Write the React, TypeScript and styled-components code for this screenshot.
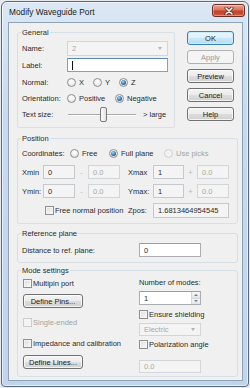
import React from 'react';
import styled, { createGlobalStyle, css } from 'styled-components';

const GlobalStyle = createGlobalStyle`
  html, body {
    margin: 0;
    padding: 0;
  }
  body {
    width: 250px;
    height: 388px;
    overflow: hidden;
    background: #e6e9ed;
    font-family: "Liberation Sans", Arial, sans-serif;
    font-size: 7.5px;
    color: #2b2b2b;
  }
  * {
    box-sizing: border-box;
  }
`;

const Window = styled.div`
  width: 248px;
  height: 386px;
  margin: 1px;
  border: 1px solid #5b6b7e;
  border-radius: 6px 6px 4px 4px;
  background: linear-gradient(180deg, #dbe7f4 0%, #c9daee 30%, #c2d4ea 100%);
  box-shadow: inset 0 0 0 1px rgba(255, 255, 255, 0.55);
  display: flex;
  flex-direction: column;
  padding: 0 5px 5px 6px;
`;

const TitleBar = styled.div`
  height: 20px;
  display: flex;
  align-items: flex-start;
  justify-content: space-between;
`;

const Title = styled.span`
  margin: 5px 0 0 1px;
  font-size: 8.3px;
  line-height: 10px;
  color: #1b1b1b;
`;

const CloseButton = styled.div`
  width: 33px;
  height: 13px;
  margin: 2px -2px 0 0;
  border: 1px solid #6e2e25;
  border-radius: 3px;
  background: linear-gradient(180deg, #eaa796 0%, #d8725c 45%, #c2412b 55%, #cc5a40 100%);
  box-shadow: inset 0 0 0 1px rgba(255, 255, 255, 0.35);
  display: flex;
  align-items: center;
  justify-content: center;
`;

const Client = styled.div`
  flex: 1;
  background: #f0f0f0;
  border: 1px solid #8ea2ba;
  padding: 5px 4px 0 8px;
  display: flex;
  flex-direction: column;
`;

const TopArea = styled.div`
  display: flex;
  align-items: flex-start;
  gap: 12px;
`;

const Group = styled.fieldset<{ $width?: number; $gap?: number; $bottom?: number }>`
  margin: ${p => p.$gap ?? 0}px 0 0 0;
  padding: 3px 6px ${p => p.$bottom ?? 5}px 4px;
  border: 1px solid #d5dfe5;
  border-radius: 3px;
  min-width: 0;
  ${p =>
    p.$width &&
    css`
      width: ${p.$width}px;
      flex: none;
    `}
`;

const Legend = styled.legend`
  margin-left: -1px;
  padding: 0 1px;
  font-size: 7.5px;
  line-height: 9px;
  color: #2b2b2b;
`;

const FormGrid = styled.div`
  display: grid;
  grid-template-columns: 45px 101px;
  grid-template-rows: 16px 16px 16px 15px 15px;
  row-gap: 1px;
  align-items: center;
`;

const Text = styled.span<{ $disabled?: boolean; $pad?: number }>`
  white-space: nowrap;
  line-height: 9px;
  color: ${p => (p.$disabled ? '#a3a3a3' : '#2b2b2b')};
  padding-left: ${p => p.$pad ?? 0}px;
`;

const Field = styled.div<{ $tone?: 'white' | 'readonly' | 'disabled' | 'focus'; $h?: number; $w?: number }>`
  height: ${p => p.$h ?? 14}px;
  ${p => p.$w && css`width: ${p.$w}px;`}
  border: 1px solid #abadb3;
  border-top-color: #9a9ea6;
  background: #fff;
  padding: 0 4px;
  display: flex;
  align-items: center;
  color: #2b2b2b;
  white-space: nowrap;
  overflow: hidden;
  ${p =>
    p.$tone === 'readonly' &&
    css`
      background: #f4f4f4;
      border-color: #c5c9cd;
    `}
  ${p =>
    p.$tone === 'disabled' &&
    css`
      background: #f4f4f4;
      border-color: #d3d6d9;
      color: #a8a8a8;
    `}
  ${p =>
    p.$tone === 'focus' &&
    css`
      border-color: #7da2ce;
      border-top-color: #5b87bb;
    `}
`;

const FieldValue = styled.span`
  flex: 1;
`;

const Caret = styled.span`
  width: 1px;
  height: 9px;
  background: #111;
`;

const ComboArrow = styled.span<{ $disabled?: boolean }>`
  width: 0;
  height: 0;
  border-left: 2.5px solid transparent;
  border-right: 2.5px solid transparent;
  border-top: 3px solid ${p => (p.$disabled ? '#b4b4b4' : '#555')};
  margin-right: 1px;
`;

const SpinButtons = styled.div`
  width: 9px;
  height: 100%;
  margin-right: -4px;
  display: flex;
  flex-direction: column;
  border-left: 1px solid #d4d7da;
`;

const SpinHalf = styled.div<{ $up?: boolean }>`
  flex: 1;
  display: flex;
  align-items: center;
  justify-content: center;
  background: linear-gradient(180deg, #f7f7f7, #e4e4e4);
  border-bottom: ${p => (p.$up ? '1px solid #d4d7da' : 'none')};
  &::after {
    content: '';
    border-left: 2px solid transparent;
    border-right: 2px solid transparent;
    ${p =>
      p.$up
        ? css`border-bottom: 2px solid #6a7d95;`
        : css`border-top: 2px solid #6a7d95;`}
  }
`;

const RadioSet = styled.div`
  display: flex;
  align-items: center;
`;

const Option = styled.div<{ $width: number }>`
  width: ${p => p.$width}px;
  flex: none;
  display: flex;
  align-items: center;
  gap: 3px;
`;

const RadioDot = styled.span<{ $checked?: boolean; $disabled?: boolean }>`
  width: 9px;
  height: 9px;
  flex: none;
  border-radius: 50%;
  border: 1px solid ${p => (p.$disabled ? '#cfcfcf' : '#8c8f93')};
  background: ${p =>
    p.$disabled
      ? '#f2f2f2'
      : 'radial-gradient(circle at 50% 35%, #ffffff 0%, #ececec 60%, #d2d2d2 100%)'};
  display: flex;
  align-items: center;
  justify-content: center;
  &::after {
    content: '';
    display: ${p => (p.$checked ? 'block' : 'none')};
    width: 5px;
    height: 5px;
    border-radius: 50%;
    background: radial-gradient(circle at 40% 35%, #a7dcf8 0%, #2f74b0 55%, #163f6b 100%);
  }
`;

const CheckBox = styled.span<{ $disabled?: boolean }>`
  width: 9px;
  height: 9px;
  flex: none;
  border: 1px solid ${p => (p.$disabled ? '#cdcdcd' : '#8c8f93')};
  background: ${p => (p.$disabled ? '#f4f4f4' : 'linear-gradient(135deg, #dcdcdc, #fbfbfb)')};
  box-shadow: inset 0 0 0 1px #f4f4f4;
`;

const CheckRow = styled.div<{ $top?: number; $left?: number }>`
  height: 11px;
  margin-top: ${p => p.$top ?? 0}px;
  margin-left: ${p => p.$left ?? 0}px;
  display: flex;
  align-items: center;
  gap: 1px;
`;

const SliderRow = styled.div`
  display: flex;
  align-items: center;
  gap: 6px;
`;

const Slider = styled.div`
  position: relative;
  width: 70px;
  height: 15px;
  display: flex;
  align-items: center;
`;

const Track = styled.div`
  flex: 1;
  margin: 0 1px;
  height: 2px;
  border-top: 1px solid #a9a9a9;
  border-bottom: 1px solid #ffffff;
`;

const Thumb = styled.div`
  position: absolute;
  top: 0;
  width: 7px;
  height: 15px;
  border: 1px solid #7b7b7b;
  border-radius: 2px;
  background: linear-gradient(90deg, #fdfdfd, #e2e2e2);
`;

const ButtonColumn = styled.div`
  margin-top: 3px;
  display: flex;
  flex-direction: column;
  gap: 5px;
`;

const Button = styled.div<{ $default?: boolean; $disabled?: boolean; $width?: number; $top?: number; $left?: number }>`
  height: 14px;
  width: ${p => p.$width ?? 47}px;
  margin-top: ${p => p.$top ?? 0}px;
  margin-left: ${p => p.$left ?? 0}px;
  border: 1px solid #707070;
  border-radius: 3px;
  background: linear-gradient(180deg, #f4f4f4 0%, #ebebeb 50%, #dddddd 51%, #d0d0d0 100%);
  box-shadow: inset 0 0 0 1px rgba(255, 255, 255, 0.75);
  display: flex;
  align-items: center;
  justify-content: center;
  color: #1b1b1b;
  white-space: nowrap;
  ${p =>
    p.$default &&
    css`
      border-color: #3c7fb1;
      background: linear-gradient(180deg, #eaf6fd 0%, #dcf0fc 50%, #c9e8fb 51%, #b5dcf4 100%);
      box-shadow: inset 0 0 0 1px #cdeafb;
    `}
  ${p =>
    p.$disabled &&
    css`
      border-color: #adb2b5;
      background: #f4f4f4;
      box-shadow: none;
      color: #9a9a9a;
    `}
`;

const Row = styled.div<{ $top?: number; $h?: number }>`
  height: ${p => p.$h ?? 15}px;
  margin-top: ${p => p.$top ?? 0}px;
  display: flex;
  align-items: center;
`;

const LabelCell = styled.div<{ $width: number }>`
  width: ${p => p.$width}px;
  flex: none;
`;

const CoordGrid = styled.div`
  margin-top: 4px;
  display: grid;
  grid-template-columns: 21px 32px 13px 32px 33px 31px 13px 32px;
  grid-template-rows: 14px 14px 15px;
  row-gap: 5px;
  align-items: center;
`;

const Sign = styled.span`
  text-align: center;
  color: #b5b5b5;
`;

const Span = styled.div<{ $from: number; $to: number; $pad?: number }>`
  grid-column: ${p => p.$from} / ${p => p.$to};
  padding-left: ${p => p.$pad ?? 0}px;
  display: flex;
  align-items: center;
`;

const ModeColumns = styled.div`
  display: flex;
`;

const ModeColumn = styled.div<{ $width?: number }>`
  ${p => (p.$width ? css`width: ${p.$width}px; flex: none;` : css`flex: 1;`)}
  display: flex;
  flex-direction: column;
  align-items: flex-start;
`;

const Stack = styled.div<{ $top?: number }>`
  margin-top: ${p => p.$top ?? 0}px;
`;

function Radio({ label, width, checked, disabled }: { label: string; width: number; checked?: boolean; disabled?: boolean }) {
  return (
    <Option $width={width}>
      <RadioDot $checked={checked} $disabled={disabled} />
      <Text $disabled={disabled}>{label}</Text>
    </Option>
  );
}

function Check({ label, disabled, top, left }: { label: string; disabled?: boolean; top?: number; left?: number }) {
  return (
    <CheckRow $top={top} $left={left}>
      <CheckBox $disabled={disabled} />
      <Text $disabled={disabled}>{label}</Text>
    </CheckRow>
  );
}

function CloseGlyph() {
  return (
    <svg width="10" height="8" viewBox="0 0 10 8">
      <path d="M2 1 L8 7 M8 1 L2 7" stroke="#5a1a12" strokeWidth="3" strokeLinecap="round" />
      <path d="M2 1 L8 7 M8 1 L2 7" stroke="#ffffff" strokeWidth="1.6" strokeLinecap="round" />
    </svg>
  );
}

export default function App() {
  return (
    <>
      <GlobalStyle />
      <Window>
        <TitleBar>
          <Title>Modify Waveguide Port</Title>
          <CloseButton>
            <CloseGlyph />
          </CloseButton>
        </TitleBar>
        <Client>
          <TopArea>
            <Group $width={158}>
              <Legend>General</Legend>
              <FormGrid>
                <Text>Name:</Text>
                <Field $tone="disabled" $h={15}>
                  <FieldValue>2</FieldValue>
                  <ComboArrow $disabled />
                </Field>
                <Text>Label:</Text>
                <Field $tone="focus">
                  <Caret />
                </Field>
                <Text>Normal:</Text>
                <RadioSet>
                  <Radio label="X" width={26} />
                  <Radio label="Y" width={26} />
                  <Radio label="Z" width={26} checked />
                </RadioSet>
                <Text>Orientation:</Text>
                <RadioSet>
                  <Radio label="Positive" width={48} />
                  <Radio label="Negative" width={50} checked />
                </RadioSet>
                <Text>Text size:</Text>
                <SliderRow>
                  <Slider>
                    <Track />
                    <Thumb style={{ left: 33 }} />
                  </Slider>
                  <Text>&gt; large</Text>
                </SliderRow>
              </FormGrid>
            </Group>
            <ButtonColumn>
              <Button $default>OK</Button>
              <Button $disabled>Apply</Button>
              <Button>Preview</Button>
              <Button>Cancel</Button>
              <Button>Help</Button>
            </ButtonColumn>
          </TopArea>

          <Group $gap={6}>
            <Legend>Position</Legend>
            <Row>
              <LabelCell $width={48}>
                <Text>Coordinates:</Text>
              </LabelCell>
              <RadioSet>
                <Radio label="Free" width={39} />
                <Radio label="Full plane" width={55} checked />
                <Radio label="Use picks" width={50} disabled />
              </RadioSet>
            </Row>
            <CoordGrid>
              <Text>Xmin</Text>
              <Field $tone="readonly">0</Field>
              <Sign>-</Sign>
              <Field $tone="disabled">0.0</Field>
              <Text $pad={8}>Xmax</Text>
              <Field $tone="readonly">1</Field>
              <Sign>+</Sign>
              <Field $tone="disabled">0.0</Field>

              <Text>Ymin:</Text>
              <Field $tone="readonly">0</Field>
              <Sign>-</Sign>
              <Field $tone="disabled">0.0</Field>
              <Text $pad={8}>Ymax:</Text>
              <Field $tone="readonly">1</Field>
              <Sign>+</Sign>
              <Field $tone="disabled">0.0</Field>

              <Span $from={2} $to={5} $pad={2}>
                <Check label="Free normal position" />
              </Span>
              <Text $pad={8}>Zpos:</Text>
              <Span $from={6} $to={9}>
                <Field $tone="readonly" $h={15} style={{ width: '100%' }}>
                  1.6813464954545
                </Field>
              </Span>
            </CoordGrid>
          </Group>

          <Group $gap={5}>
            <Legend>Reference plane</Legend>
            <Row $h={14} $top={2}>
              <LabelCell $width={117}>
                <Text>Distance to ref. plane:</Text>
              </LabelCell>
              <Field $w={62}>0</Field>
            </Row>
          </Group>

          <Group $gap={3} $bottom={3}>
            <Legend>Mode settings</Legend>
            <ModeColumns>
              <ModeColumn $width={117}>
                <Check label="Multipin port" top={0} left={1} />
                <Button $width={60} $top={5} $left={1}>
                  Define Pins...
                </Button>
                <Check label="Single-ended" disabled top={9} left={1} />
                <Check label="Impedance and calibration" top={10} left={1} />
                <Button $width={60} $top={6} $left={1}>
                  Define Lines...
                </Button>
              </ModeColumn>
              <ModeColumn>
                <Text>Number of modes:</Text>
                <Stack $top={4}>
                  <Field $w={62}>
                    <FieldValue>1</FieldValue>
                    <SpinButtons>
                      <SpinHalf $up />
                      <SpinHalf />
                    </SpinButtons>
                  </Field>
                </Stack>
                <Check label="Ensure shielding" top={4} />
                <Stack $top={3}>
                  <Field $tone="disabled" $w={62} $h={13}>
                    <FieldValue>Electric</FieldValue>
                    <ComboArrow $disabled />
                  </Field>
                </Stack>
                <Check label="Polarization angle" top={3} />
                <Stack $top={10}>
                  <Field $tone="disabled" $w={62} $h={13}>
                    0.0
                  </Field>
                </Stack>
              </ModeColumn>
            </ModeColumns>
          </Group>
        </Client>
      </Window>
    </>
  );
}
